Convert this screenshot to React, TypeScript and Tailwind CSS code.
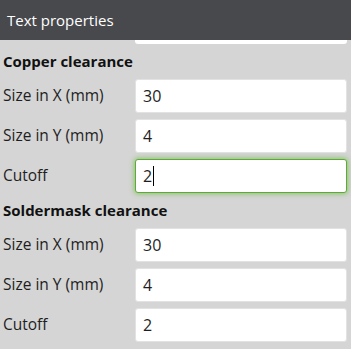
import React from "react";

const font = { fontFamily: '"Open Sans", "Noto Sans", sans-serif' };

function Row({ label, value, focused }: { label: string; value: string; focused?: boolean }) {
  return (
    <div className="flex items-center h-[34px]">
      <div className="w-[132px] text-[15.5px] text-[#1e1e1e] leading-none">{label}</div>
      <div
        className={
          "w-[212px] h-[34px] bg-white rounded-[3px] flex items-center pl-[7px] text-[16px] text-[#1e1e1e] " +
          (focused
            ? "border border-[#5cab32] shadow-[0_0_5px_1px_rgba(110,190,70,0.7)]"
            : "border border-[#e2e2e2]")
        }
      >
        <span className="leading-none">{value}</span>
        {focused && <span className="inline-block w-[1px] h-[20px] bg-black ml-[1px]" />}
      </div>
    </div>
  );
}

function Heading({ children }: { children: string }) {
  return (
    <div className="h-[35px] flex items-center font-bold text-[15px] text-[#111]">{children}</div>
  );
}

export default function App() {
  return (
    <div className="w-[351px] h-[349px] bg-[#d5d5d5] overflow-hidden" style={font}>
      <div className="h-[40px] bg-[#48494d] flex items-center pl-[7px] text-white text-[15px]">
        Text properties
      </div>
      <div className="pl-[3px]">
        <div className="ml-[132px] w-[212px] h-[4px] bg-white rounded-b-[3px]" />
        <Heading>Copper clearance</Heading>
        <div className="flex flex-col gap-[6px]">
          <Row label="Size in X (mm)" value="30" />
          <Row label="Size in Y (mm)" value="4" />
          <Row label="Cutoff" value="2" focused />
        </div>
        <Heading>Soldermask clearance</Heading>
        <div className="flex flex-col gap-[6px]">
          <Row label="Size in X (mm)" value="30" />
          <Row label="Size in Y (mm)" value="4" />
          <Row label="Cutoff" value="2" />
        </div>
      </div>
    </div>
  );
}
